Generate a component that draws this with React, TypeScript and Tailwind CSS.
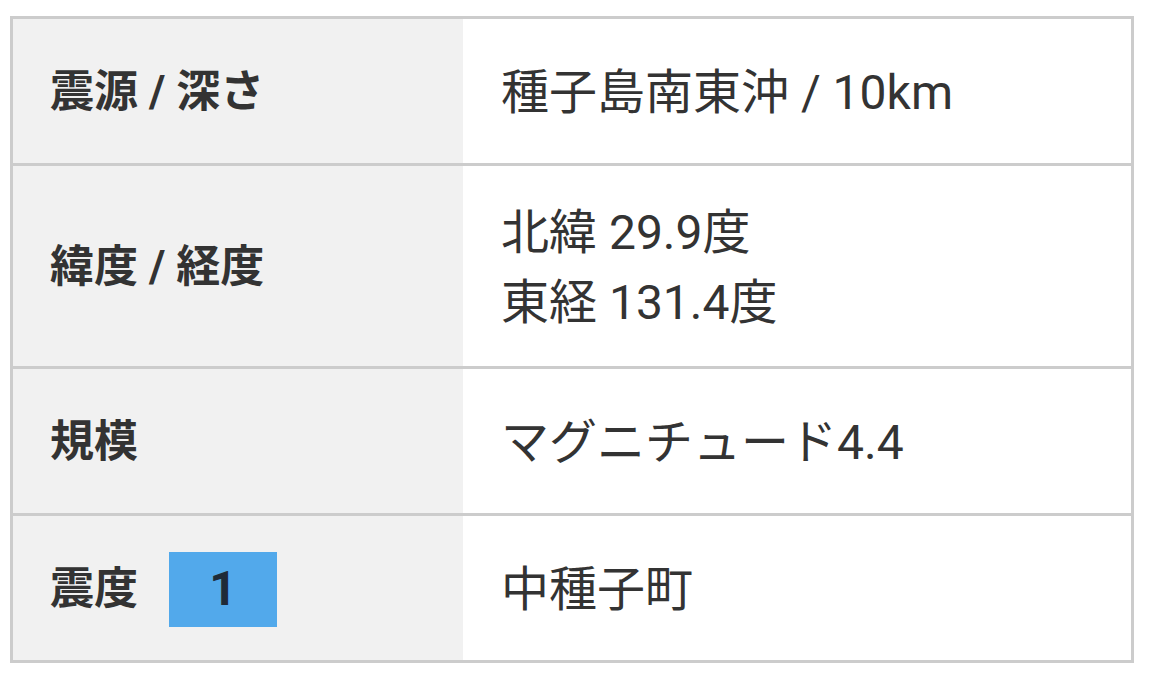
const FONT = "font-['Roboto','Noto_Sans_CJK_JP',sans-serif]";

type Row = { label: string; value: string[]; shindo?: string };

const ROWS: Row[] = [
  { label: "震源 / 深さ", value: ["種子島南東沖 / 10km"] },
  { label: "緯度 / 経度", value: ["北緯 29.9度", "東経 131.4度"] },
  { label: "規模", value: ["マグニチュード4.4"] },
  { label: "震度", value: ["中種子町"], shindo: "1" },
];

export default function App() {
  return (
    <div className={`min-h-screen bg-white pt-[16px] pl-[10px] ${FONT}`}>
      <div className="w-[1124px] border-[3px] border-[#cccccc] leading-[70px] text-[#333333]">
        {ROWS.map((r, i) => (
          <div key={r.label}
            className={`grid grid-cols-[450px_1fr] ${i < ROWS.length - 1 ? "border-b-[3px] border-[#cccccc]" : ""}`}>
            <div className="flex min-h-[144px] items-center bg-[#f1f1f1] pl-[37px] pt-[2px] text-[44px] font-bold">
              <span>{r.label}</span>
              {r.shindo && (
                <span className="ml-[31px] flex h-[75px] w-[108px] items-center justify-center bg-[#52a9eb] text-[48px] font-bold text-[#1f2b38]">
                  {r.shindo}
                </span>
              )}
            </div>
            <div className="flex min-h-[144px] flex-col justify-center pt-[32px] pb-[28px] pl-[38px] text-[48px]">
              {r.value.map(v => <div key={v}>{v}</div>)}
            </div>
          </div>
        ))}
      </div>
    </div>
  );
}
